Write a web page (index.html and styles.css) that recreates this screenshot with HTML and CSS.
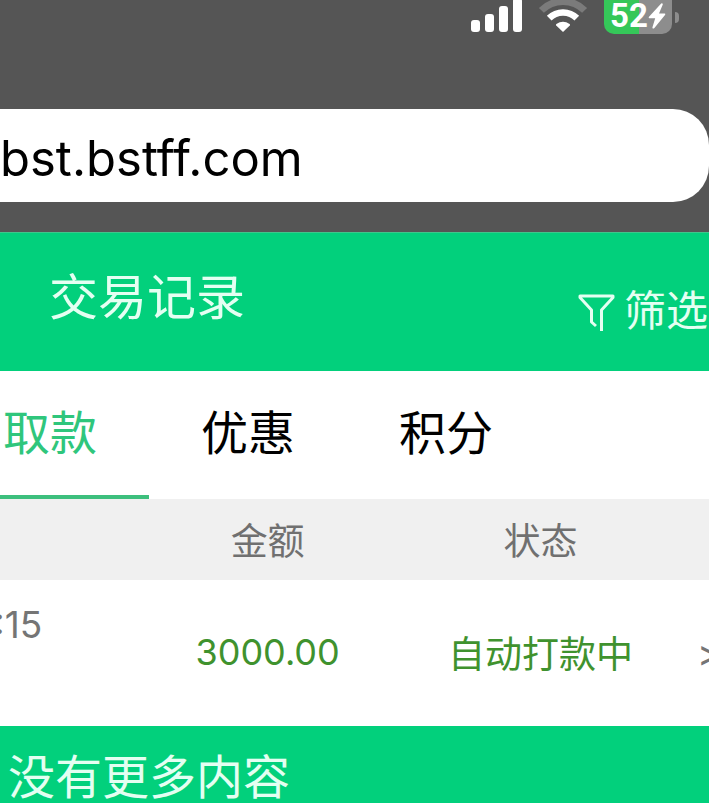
FILE: index.html
```html
<!DOCTYPE html>
<html lang="zh-CN">
<head>
    <meta charset="UTF-8">
    <meta name="viewport" content="width=device-width, initial-scale=1.0">
    <title>交易记录</title>
    <link rel="stylesheet" href="styles.css">
</head>
<body>
    <div class="browser">
        <div class="status-bar">
            <svg class="signal" width="52" height="34" viewBox="0 0 52 34" fill="#fff">
                <rect x="0" y="20" width="9" height="12" rx="3"/>
                <rect x="14" y="14" width="9" height="18" rx="3"/>
                <rect x="28" y="6" width="9" height="26" rx="3"/>
                <rect x="42" y="-2" width="9" height="34" rx="3"/>
            </svg>
            <svg class="wifi" width="50" height="34" viewBox="0 0 50 34" fill="none">
                <path d="M3.4 10.4A30.5 30.5 0 0 1 46.6 10.4" stroke="#7b7b7b" stroke-width="7"/>
                <path d="M11.2 18.2A19.5 19.5 0 0 1 38.8 18.2" stroke="#fff" stroke-width="6.6"/>
                <path d="M25 32L18.2 25.4Q17.6 24.6 18.4 24Q25 19.4 31.6 24Q32.4 24.6 31.8 25.4Z" fill="#fff"/>
            </svg>
            <div class="battery">
                <span>52</span>
                <svg width="18" height="28" viewBox="0 0 18 28" fill="#fff">
                    <path d="M13.2 1.4L0.8 15Q0.4 16.2 1.4 16.2H7.2L4.4 25.4Q4.8 27.4 6.4 26L17.2 12.8Q17.6 11.6 16.6 11.6H11L14.8 2.4Q14.6 0.6 13.2 1.4Z"/>
                </svg>
            </div>
            <div class="battery-tip"></div>
        </div>
        <input class="address" type="text" value="bst.bstff.com" aria-label="网址">
    </div>

    <header class="header">
        <h1>交易记录</h1>
        <button class="filter" type="button">
            <svg width="37" height="38" viewBox="0 0 37 38" fill="none" stroke="#e4fff2" stroke-width="3" stroke-linejoin="round">
                <path d="M18 32L13.5 28V16L2 3.5V2H35V3.5L23.5 16V37"/>
            </svg>
            <span>筛选</span>
        </button>
    </header>

    <nav class="tabs">
        <a href="#withdraw" class="tab active">取款</a>
        <a href="#bonus" class="tab">优惠</a>
        <a href="#points" class="tab">积分</a>
    </nav>

    <table class="records">
        <thead>
            <tr>
                <th class="col-time"></th>
                <th class="col-amount">金额</th>
                <th class="col-status">状态</th>
                <th class="col-more"></th>
            </tr>
        </thead>
        <tbody>
            <tr>
                <td class="time">:15</td>
                <td class="amount">3000.00</td>
                <td>自动打款中</td>
                <td class="more">&gt;</td>
            </tr>
        </tbody>
    </table>

    <footer class="footer">没有更多内容</footer>
</body>
</html>
```

FILE: styles.css
```css
* {
    box-sizing: border-box;
}
body {
    margin: 0;
    min-height: 100vh;
    display: flex;
    flex-direction: column;
    overflow: hidden;
    background: #fff;
    color: #000;
    font-family: Inter, "Noto Sans CJK SC", sans-serif;
}

/* browser chrome */
.browser {
    background: #555;
    padding-bottom: 30px;
}
.status-bar {
    display: flex;
    justify-content: flex-end;
    align-items: center;
    height: 34px;
    padding-right: 30px;
    margin-bottom: 75px;
}
.signal {
    margin-right: 15px;
}
.wifi {
    margin-right: 16px;
}
.battery {
    display: flex;
    align-items: center;
    justify-content: center;
    width: 68px;
    height: 34px;
    padding-bottom: 3px;
    border-radius: 0 0 10px 10px;
    background: linear-gradient(to right, #35c759 52%, #8d8d8d 52%);
    color: #fff;
    font-family: Roboto, sans-serif;
    font-size: 33px;
    font-weight: 700;
    line-height: 32px;
}
.battery-tip {
    width: 4px;
    height: 11px;
    margin-left: 3px;
    border-radius: 0 4px 4px 0;
    background: #8d8d8d;
}
.address {
    display: block;
    width: 100%;
    height: 93px;
    padding: 6px 0 0;
    border: none;
    border-radius: 0 36px 36px 0;
    outline: none;
    background: #fff;
    color: #000;
    font-family: inherit;
    font-size: 49px;
}

/* page header */
.header {
    display: flex;
    justify-content: space-between;
    align-items: center;
    height: 139px;
    padding-left: 49px;
    border-top: 1px solid #3fc68b;
    background: #02d07c;
    color: #e4fff2;
}
.header h1 {
    margin: 0 0 8px;
    font-size: 49px;
    font-weight: 400;
    line-height: 60px;
}
.filter {
    display: flex;
    align-items: center;
    gap: 9px;
    margin-top: 18px;
    padding: 0 1px 0 0;
    border: none;
    background: none;
    color: inherit;
    font-family: inherit;
    font-size: 42px;
    line-height: 60px;
    cursor: pointer;
}
.filter svg {
    margin-top: 4px;
}

/* tabs, first one scrolled partly out of view */
.tabs {
    display: flex;
    height: 128px;
    margin-left: -49px;
}
.tab {
    flex: 0 0 198px;
    border-bottom: 4px solid transparent;
    color: #000;
    font-size: 47px;
    line-height: 124px;
    text-align: center;
    text-decoration: none;
}
.tab.active {
    border-bottom-color: #3dbf7d;
    color: #2fc67c;
}

.records {
    width: 100%;
    table-layout: fixed;
    border-collapse: collapse;
    font-size: 37px;
}
.records th {
    height: 81px;
    padding: 0 0 2px;
    background: #f0f0f0;
    color: #707070;
    font-weight: 400;
}
.records td {
    height: 146px;
    padding: 0 0 2px;
    color: #3f922e;
    text-align: center;
}
.col-time {
    width: 18.5%;
}
.col-amount,
.col-status {
    width: 38.5%;
}
.records .amount {
    font-size: 36px;
}
.records .time {
    padding-top: 17px;
    color: #757575;
    line-height: 56px;
    text-align: left;
    text-indent: -6px;
    vertical-align: top;
}
.records .more {
    padding-left: 20px;
    color: #757575;
    text-align: left;
}

.footer {
    flex: 1;
    padding: 21px 8px 0;
    background: #02d07c;
    color: #e4fff2;
    font-size: 47px;
    line-height: 60px;
}
```
